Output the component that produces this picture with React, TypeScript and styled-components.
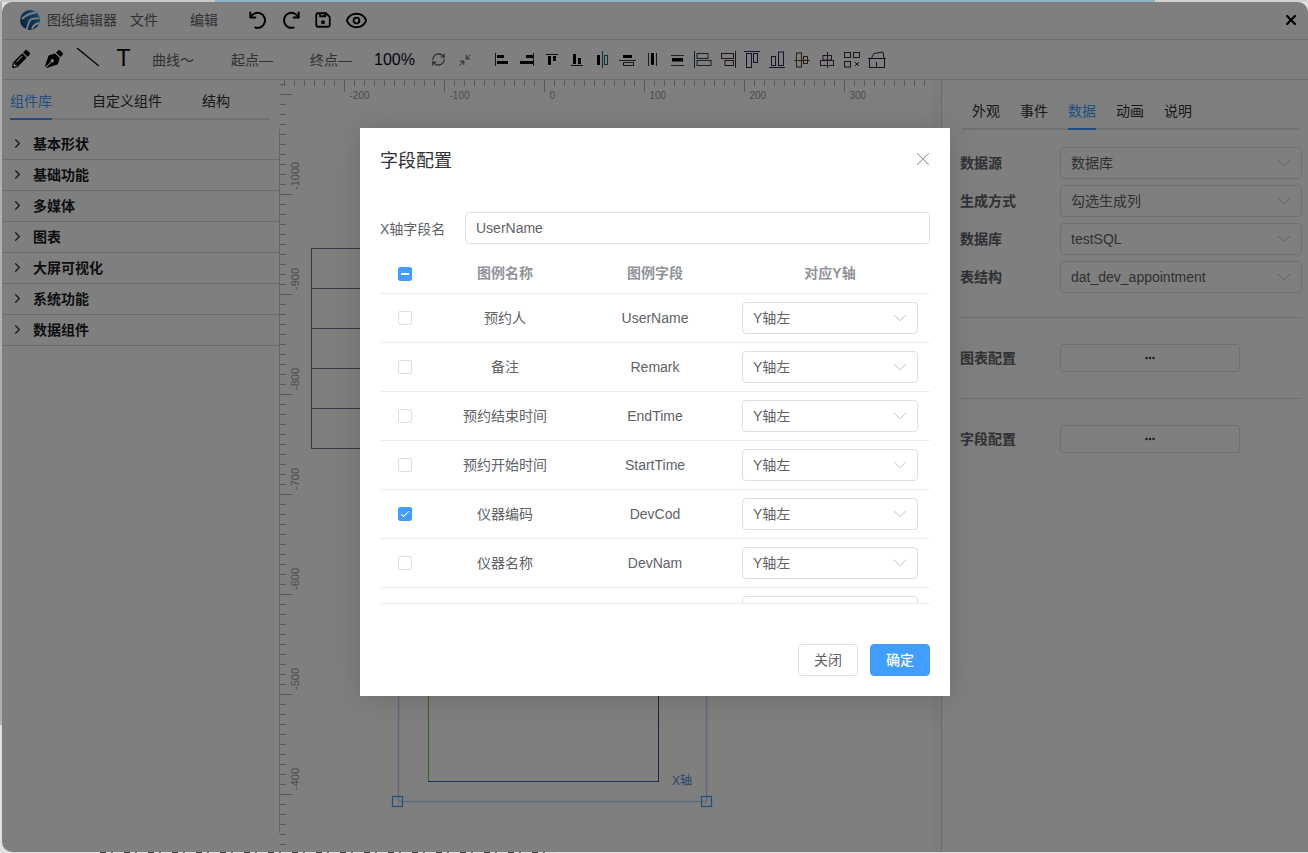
import React from "react";
import styled, { createGlobalStyle } from "styled-components";
import { ChevronDown, ChevronRight, Ellipsis, Eye, Minimize2, RefreshCw, X } from "lucide-react";
import { FaPencilAlt, FaPenNib } from "react-icons/fa";

const Global = createGlobalStyle`
  html, body { height: 100%; margin: 0; }
  body {
    box-sizing: border-box;
    padding: 2px 0 0 2px;
    overflow: hidden;
    font-family: "Liberation Sans", "Noto Sans CJK SC", sans-serif;
    background:
      repeating-linear-gradient(90deg, #444 0 6px, #e6e6e6 6px 11px, #7a6a80 11px 13px, #ddd 13px 24px) 100px 100% / 455px 1px no-repeat,
      linear-gradient(90deg, #c9c9c9 0 215px, #8fb4ca 215px 1155px, #d4d4d4 1155px 1308px) 0 0 / 100% 2px no-repeat,
      linear-gradient(#b0b0b0, #b0b0b0) 0 0 / 2px 725px no-repeat,
      #e2e2e2;
  }
  * { box-sizing: border-box; }
`;

const Window = styled.div`
  position: relative;
  width: 1306px;
  height: 850px;
  background: #fff;
  border-radius: 10px 10px 0 10px;
  overflow: hidden;
  display: flex;
  flex-direction: column;
`;
const Header = styled.header`
  height: 38px;
  flex: none;
  display: flex;
  align-items: center;
  padding: 0 9px 1px 18px;
  border-bottom: 1px solid #dcdcdc;
  font-size: 14px;
  color: #606266;
`;
const AppTitle = styled.span`
  margin-left: 7px;
  padding-bottom: 2px;
  color: #606266;
`;
const Menu = styled.span<{ $ml: number }>`
  margin-left: ${(p) => p.$ml}px;
  padding-bottom: 2px;
  color: #606266;
`;
const HeadIcon = styled.svg<{ $ml: number; $flip?: boolean }>`
  margin-left: ${(p) => p.$ml}px;
  fill: none;
  stroke: #000;
  stroke-width: 2.4;
  stroke-linecap: round;
  stroke-linejoin: round;
  transform: ${(p) => (p.$flip ? "scaleX(-1)" : "none")};
`;
const EyeHolder = styled.span`
  margin-left: 13px;
  display: flex;
  color: #000;
`;
const CloseApp = styled.span`
  margin-left: auto;
  display: flex;
  color: #000;
`;
const Toolbar = styled.div`
  height: 40px;
  flex: none;
  display: flex;
  align-items: center;
  padding-left: 2px;
  border-bottom: 1px solid #dcdcdc;
  color: #000;
`;
const ToolCell = styled.span`
  width: 33px;
  display: flex;
  justify-content: center;
  align-items: center;
  padding-bottom: 2px;
  color: #000;
`;
const TLetter = styled.span`
  margin-left: 8px;
  font-size: 23px;
  line-height: 1;
  color: #000;
`;
const ToolText = styled.span<{ $ml: number }>`
  margin-left: ${(p) => p.$ml}px;
  padding-bottom: 2px;
  font-size: 14px;
  color: #606266;
  white-space: nowrap;
`;
const Zoom = styled.span`
  margin-left: 22px;
  font-size: 16px;
  color: #0a0a2a;
`;
const SmallIcon = styled.span<{ $ml: number }>`
  margin-left: ${(p) => p.$ml}px;
  display: flex;
  color: #444;
`;
const AlignGroup = styled.div`
  margin-left: 18.1px;
  display: flex;
`;
const AlignSvg = styled.svg`
  display: block;
  width: 25px;
  height: 24px;
  fill: none;
  stroke-width: 1;
`;
const Body = styled.div`
  flex: 1;
  min-height: 0;
  display: flex;
`;
const Sidebar = styled.aside`
  width: 278px;
  flex: none;
  padding-top: 2px;
  display: flex;
  flex-direction: column;
`;
const TabBar = styled.div<{ $gap: number; $pad: number; $ml: number; $w: number }>`
  display: flex;
  gap: ${(p) => p.$gap}px;
  padding-left: ${(p) => p.$pad}px;
  margin-left: ${(p) => p.$ml}px;
  width: ${(p) => p.$w}px;
  height: 38px;
  flex: none;
  border-bottom: 2px solid #e4e7ed;
`;
const Tab = styled.div<{ $active?: boolean }>`
  height: 38px;
  line-height: 38px;
  font-size: 14px;
  white-space: nowrap;
  color: ${(p) => (p.$active ? "#409eff" : "#303133")};
  border-bottom: 2px solid ${(p) => (p.$active ? "#409eff" : "transparent")};
`;
const Accordion = styled.div`
  margin: 9px 0 19px;
  flex: 1;
  border-right: 1px solid #c8c8c8;
`;
const AccRow = styled.div`
  height: 31px;
  display: flex;
  align-items: center;
  padding: 0 0 2px 8px;
  gap: 8px;
  border-bottom: 1px solid #d6d6d6;
  font-size: 14px;
  font-weight: 700;
  color: #1a1a1a;
`;
const CanvasArea = styled.main`
  width: 661px;
  flex: none;
  background: #fff;
`;
const CanvasSvg = styled.svg`
  display: block;
  width: 661px;
  height: 772px;
`;
const RightPanel = styled.aside`
  flex: 1;
  padding-top: 12px;
  border-left: 1px solid #d6d6d6;
`;
const Form = styled.div`
  margin: 17px 0 0 18px;
  display: flex;
  flex-direction: column;
  gap: 6px;
  width: 342px;
`;
const FormRow = styled.div`
  display: flex;
  align-items: center;
`;
const Label = styled.span`
  width: 100px;
  padding-bottom: 2px;
  font-size: 14px;
  font-weight: 700;
  color: #606266;
`;
const Select = styled.div<{ $w: number }>`
  width: ${(p) => p.$w}px;
  height: 32px;
  display: flex;
  align-items: center;
  justify-content: space-between;
  padding: 0 6px 0 10px;
  border: 1px solid #dcdfe6;
  border-radius: 4px;
  background: #fff;
  font-size: 14px;
  color: #606266;
  flex: none;
`;
const SelectText = styled.span<{ $cjk?: boolean }>`
  padding-bottom: ${(p) => (p.$cjk ? 2 : 0)}px;
`;
const Divider = styled.div`
  height: 1px;
  background: #dcdfe6;
  width: 342px;
`;
const ConfigRow = styled(FormRow)`
  margin: 26px 0;
`;
const DotsButton = styled.div`
  width: 180px;
  height: 28px;
  display: flex;
  align-items: center;
  justify-content: center;
  border: 1px solid #dcdfe6;
  border-radius: 3px;
  color: #303133;
`;
const ConfigBlock = styled.div`
  margin: 24px 0 0 18px;
`;
const Mask = styled.div`
  position: absolute;
  inset: 0;
  background: rgba(0, 0, 0, 0.5);
`;
const Dialog = styled.section`
  position: relative;
  margin: 126px 0 0 358px;
  width: 590px;
  height: 568px;
  display: flex;
  flex-direction: column;
  padding: 20px;
  background: #fff;
  box-shadow: 0 2px 30px rgba(0, 0, 0, 0.15);
`;
const DialogTitle = styled.h2`
  margin: 0 0 38px;
  font-size: 18px;
  line-height: 26px;
  font-weight: 400;
  color: #303133;
`;
const DialogClose = styled.span`
  position: absolute;
  top: 20px;
  right: 16px;
  display: flex;
  color: #909399;
`;
const FieldRow = styled.div`
  display: flex;
  align-items: center;
  margin-bottom: 10px;
`;
const FieldLabel = styled.label`
  width: 85px;
  font-size: 14px;
  color: #606266;
`;
const TextInput = styled.div`
  flex: 1;
  height: 32px;
  line-height: 30px;
  padding: 0 10px;
  border: 1px solid #dcdfe6;
  border-radius: 4px;
  font-size: 14px;
  color: #606266;
`;
const TableScroll = styled.div`
  height: 350px;
  overflow: hidden;
  border-bottom: 1px solid #ebeef5;
`;
const Row = styled.div<{ $head?: boolean }>`
  display: grid;
  grid-template-columns: 50px 150px 150px 200px;
  align-items: center;
  height: ${(p) => (p.$head ? 40 : 49)}px;
  border-bottom: 1px solid #ebeef5;
  font-size: 14px;
  color: ${(p) => (p.$head ? "#909399" : "#606266")};
  font-weight: ${(p) => (p.$head ? 700 : 400)};
  text-align: center;
`;
const HeadCell = styled.span`
  padding-bottom: 4px;
`;
const NameCell = styled.span`
  padding-bottom: 2px;
`;
const CheckCell = styled.span`
  display: flex;
  justify-content: center;
`;
const Check = styled.span<{ $state?: "on" | "some" }>`
  position: relative;
  width: 14px;
  height: 14px;
  border-radius: 2px;
  border: 1px solid ${(p) => (p.$state ? "#409eff" : "#dcdfe6")};
  background: ${(p) => (p.$state ? "#409eff" : "#fff")};
  &::after {
    content: "";
    position: absolute;
    display: ${(p) => (p.$state ? "block" : "none")};
    ${(p) =>
      p.$state === "on"
        ? `left: 4px; top: 1px; width: 3px; height: 7px; border: 1px solid #fff; border-width: 0 1px 1px 0; transform: rotate(45deg);`
        : `left: 2px; top: 5px; width: 8px; height: 2px; background: #fff;`}
  }
`;
const SelectCell = styled.span`
  display: flex;
  justify-content: center;
`;
const Footer = styled.div`
  margin-top: auto;
  display: flex;
  justify-content: flex-end;
  gap: 12px;
`;
const Button = styled.button<{ $primary?: boolean }>`
  width: 60px;
  height: 32px;
  padding: 0 0 2px;
  border-radius: 4px;
  border: 1px solid ${(p) => (p.$primary ? "#409eff" : "#dcdfe6")};
  background: ${(p) => (p.$primary ? "#409eff" : "#fff")};
  color: ${(p) => (p.$primary ? "#fff" : "#606266")};
  font: ${(p) => (p.$primary ? 500 : 400)} 14px "Liberation Sans", "Noto Sans CJK SC", sans-serif;
`;

const Logo = () => (
  <svg width="20" height="20" viewBox="0 0 20 20">
    <defs>
      <linearGradient id="lg" x1="0" y1="1" x2="1" y2="0">
        <stop offset="0" stopColor="#0f3766" />
        <stop offset="1" stopColor="#2f9be6" />
      </linearGradient>
    </defs>
    <circle cx="10" cy="10" r="10" fill="url(#lg)" />
    <path d="M2 9 C6 5 11 3 16 2.5 M6.5 19.5 L9 12 C10 9 14 8 19 8.5 M12 19 C13 15.5 16 13.5 19.5 13" fill="none" stroke="#fff" strokeWidth="1.8" />
  </svg>
);

const Undo = ({ ml, flip }: { ml: number; flip?: boolean }) => (
  <HeadIcon $ml={ml} $flip={flip} width="20" height="20" viewBox="0 0 24 24">
    <path d="M4.5 8.5A9 9 0 1 1 10 21" />
    <path d="M4 3v6h6" />
  </HeadIcon>
);

type Shape = [number, number, number, number, string?];
type AlignDef = { x0: number; c: string; lines?: number[][]; rects: Shape[] };
const K = "#000";
const alignIcons: AlignDef[] = [
  { x0: 490, c: "#1c2b3a", lines: [[495.5, 53, 495.5, 66]], rects: [[497, 55, 7, 3, K], [497, 61, 11, 3, K]] },
  { x0: 515, c: "#2a2218", lines: [[533.5, 53, 533.5, 66]], rects: [[526, 55, 7, 3, K], [520, 61, 13, 3, K]] },
  { x0: 540, c: "#222", lines: [[546, 54.5, 558, 54.5]], rects: [[548, 56, 3, 9, K], [553, 56, 3, 5, K]] },
  { x0: 565, c: "#222", lines: [[571, 65.5, 583, 65.5]], rects: [[573, 54, 3, 10, K], [578, 58, 3, 6, K]] },
  { x0: 590, c: "#1d5a80", lines: [[602.5, 51, 602.5, 68]], rects: [[597, 55, 3, 10, K], [604.5, 55.5, 3, 9]] },
  { x0: 615, c: "#333", lines: [[619, 60.5, 636, 60.5]], rects: [[623, 55, 9, 3, K], [623.5, 62.5, 10, 3]] },
  { x0: 640, c: "#335", lines: [[648.5, 53, 648.5, 66], [656.5, 53, 656.5, 66]], rects: [[651, 53, 3, 12, K]] },
  { x0: 665, c: "#444", lines: [[671, 55.5, 684, 55.5], [671, 65.5, 684, 65.5]], rects: [[672, 58, 11, 3.5, K]] },
  { x0: 690, c: "#2a3f55", lines: [[694.5, 51, 694.5, 68]], rects: [[697, 53.5, 11, 5], [697, 60.5, 14, 5]] },
  { x0: 715, c: "#3a2a30", lines: [[735.5, 51, 735.5, 68]], rects: [[721.5, 53.5, 12, 5], [725, 60.5, 8.5, 5]] },
  { x0: 740, c: "#3a1d4d", lines: [[744, 51.5, 760, 51.5]], rects: [[746.5, 53.5, 5, 14], [753.5, 53.5, 4, 9]] },
  { x0: 765, c: "#2b2350", lines: [[769, 67.5, 785, 67.5]], rects: [[771.5, 56.5, 4, 9], [778.5, 52, 5, 13.5]] },
  { x0: 790, c: "#4d3a1d", lines: [[794, 60.5, 810, 60.5]], rects: [[796.5, 53, 5, 14], [803.5, 56.5, 4, 7]] },
  { x0: 815, c: "#4a2a4a", lines: [[827.5, 52, 827.5, 68]], rects: [[823, 55.5, 8.5, 4.5], [820.5, 60.5, 13, 5]] },
  { x0: 840, c: "#3a3020", rects: [[844.5, 52.5, 6, 5], [853.5, 52.5, 6, 5], [844.5, 61.5, 6, 5.5]], lines: [[855, 62, 859, 66], [859, 62, 855, 66]] },
  { x0: 865, c: "#2f2040", rects: [[869.5, 58.5, 15, 9]], lines: [[868, 58.5, 886, 58.5], [871.5, 58, 874, 53.5], [874, 53.5, 883, 52], [883, 52, 884, 58], [876.5, 62, 876.5, 67]] },
];

const AlignIcon = ({ def }: { def: AlignDef }) => (
  <AlignSvg viewBox={`${def.x0} 48 25 24`}>
    {def.lines?.map((l, i) => (
      <line key={i} x1={l[0]} y1={l[1]} x2={l[2]} y2={l[3]} stroke={def.c} />
    ))}
    {def.rects.map((r, i) => (
      <rect key={i} x={r[0]} y={r[1]} width={r[2]} height={r[3]} fill={r[4] ?? "none"} stroke={r[4] ? "none" : def.c} />
    ))}
  </AlignSvg>
);

const range = (from: number, to: number, step: number) => {
  const out: number[] = [];
  for (let v = from; v <= to; v += step) out.push(v);
  return out;
};

const CanvasDrawing = () => (
  <CanvasSvg viewBox="280 80 661 772">
    <rect x="931" y="80" width="10" height="772" fill="#f8f8f8" />
    {range(284.5, 925, 10).map((x) => {
      const long = Math.round(x - 544.5) % 100 === 0;
      return <line key={x} x1={x} y1={80} x2={x} y2={long ? 92 : 86} stroke="#b0b0b0" />;
    })}
    {range(-200, 300, 100).map((n) => (
      <text key={n} x={544.5 + n + 5} y={99} fontSize="10" fill="#999" fontFamily="Liberation Sans">
        {n}
      </text>
    ))}
    {range(84.5, 845, 10).map((y) => {
      const long = Math.round(y - 194.5) % 100 === 0;
      return <line key={y} x1={280} y1={y} x2={long ? 292 : 286} y2={y} stroke="#b0b0b0" />;
    })}
    {range(-1000, -400, 100).map((n, i) => {
      const y = 190 + i * 100;
      return (
        <text key={n} x={299} y={y} transform={`rotate(-90 299 ${y})`} fontSize="11" fill="#999" fontFamily="Liberation Sans">
          {n}
        </text>
      );
    })}
    {[248.5, 288.5, 328.5, 368.5, 408.5, 448.5].map((y) => (
      <line key={y} x1={311} y1={y} x2={420} y2={y} stroke="#70708c" />
    ))}
    <line x1="311.5" y1="248" x2="311.5" y2="449" stroke="#70708c" />
    <line x1="398.5" y1="600" x2="398.5" y2="801" stroke="#b6d4f5" strokeWidth="1.5" />
    <line x1="706.5" y1="600" x2="706.5" y2="801" stroke="#b6d4f5" strokeWidth="1.5" />
    <line x1="398" y1="801.5" x2="707" y2="801.5" stroke="#b6d4f5" strokeWidth="1.5" />
    <line x1="428.5" y1="600" x2="428.5" y2="782" stroke="#6fbf3a" />
    <line x1="428" y1="781.5" x2="658" y2="781.5" stroke="#3a6a9c" />
    <line x1="658.5" y1="600" x2="658.5" y2="782" stroke="#3a4a80" />
    <text x="672" y="785" fontSize="12" fill="#4a8ed6" fontFamily="Liberation Sans, Noto Sans CJK SC">
      X轴
    </text>
    <rect x="392.5" y="796.5" width="10" height="10" fill="none" stroke="#409eff" strokeWidth="1.2" />
    <rect x="701.5" y="796.5" width="10" height="10" fill="none" stroke="#409eff" strokeWidth="1.2" />
  </CanvasSvg>
);

const SideItems = ["基本形状", "基础功能", "多媒体", "图表", "大屏可视化", "系统功能", "数据组件"];
const RightTabs = ["外观", "事件", "数据", "动画", "说明"];
const FormItems: [string, string, boolean][] = [
  ["数据源", "数据库", true],
  ["生成方式", "勾选生成列", true],
  ["数据库", "testSQL", false],
  ["表结构", "dat_dev_appointment", false],
];
const Fields: { name: string; field: string; state?: "on" }[] = [
  { name: "预约人", field: "UserName" },
  { name: "备注", field: "Remark" },
  { name: "预约结束时间", field: "EndTime" },
  { name: "预约开始时间", field: "StartTime" },
  { name: "仪器编码", field: "DevCod", state: "on" },
  { name: "仪器名称", field: "DevNam" },
  { name: "", field: "" },
];

const Chevron = () => <ChevronDown size={22} strokeWidth={0.9} color="#aeb2ba" />;

export default function App() {
  return (
    <>
      <Global />
      <Window>
        <Header>
          <Logo />
          <AppTitle>图纸编辑器</AppTitle>
          <Menu $ml={13}>文件</Menu>
          <Menu $ml={32}>编辑</Menu>
          <Undo ml={29} />
          <Undo ml={15} flip />
          <HeadIcon $ml={12} width="18" height="18" viewBox="0 0 24 24">
            <path d="M5 3h11l5 5v11a2 2 0 0 1-2 2H5a2 2 0 0 1-2-2V5a2 2 0 0 1 2-2z" />
            <path d="M8 3v4h7V3" />
            <circle cx="12" cy="15" r="1.5" fill="#000" />
          </HeadIcon>
          <EyeHolder>
            <Eye size={23} strokeWidth={2} />
          </EyeHolder>
          <CloseApp>
            <X size={16} strokeWidth={3.2} />
          </CloseApp>
        </Header>
        <Toolbar>
          <ToolCell>
            <FaPencilAlt size={18} />
          </ToolCell>
          <ToolCell>
            <FaPenNib size={18} />
          </ToolCell>
          <ToolCell>
            <svg width="24" height="24" viewBox="0 0 24 24">
              <line x1="2" y1="1" x2="24" y2="19" stroke="#000" strokeWidth="1.3" />
            </svg>
          </ToolCell>
          <ToolCell>
            <TLetter>T</TLetter>
          </ToolCell>
          <ToolText $ml={16}>曲线～</ToolText>
          <ToolText $ml={37}>起点—</ToolText>
          <ToolText $ml={37}>终点—</ToolText>
          <Zoom>100%</Zoom>
          <SmallIcon $ml={16}>
            <RefreshCw size={15} strokeWidth={1.7} />
          </SmallIcon>
          <SmallIcon $ml={12}>
            <Minimize2 size={14} strokeWidth={1.6} />
          </SmallIcon>
          <AlignGroup>
            {alignIcons.map((def) => (
              <AlignIcon key={def.x0} def={def} />
            ))}
          </AlignGroup>
        </Toolbar>
        <Body>
          <Sidebar>
            <TabBar $gap={40} $pad={0} $ml={8} $w={260}>
              <Tab $active>组件库</Tab>
              <Tab>自定义组件</Tab>
              <Tab>结构</Tab>
            </TabBar>
            <Accordion>
              {SideItems.map((s) => (
                <AccRow key={s}>
                  <ChevronRight size={15} strokeWidth={2} color="#303133" />
                  {s}
                </AccRow>
              ))}
            </Accordion>
          </Sidebar>
          <CanvasArea>
            <CanvasDrawing />
          </CanvasArea>
          <RightPanel>
            <TabBar $gap={20} $pad={10} $ml={20} $w={338}>
              {RightTabs.map((t) => (
                <Tab key={t} $active={t === "数据"}>
                  {t}
                </Tab>
              ))}
            </TabBar>
            <Form>
              {FormItems.map(([label, value, cjk]) => (
                <FormRow key={label}>
                  <Label>{label}</Label>
                  <Select $w={242}>
                    <SelectText $cjk={cjk}>{value}</SelectText>
                    <Chevron />
                  </Select>
                </FormRow>
              ))}
            </Form>
            {["图表配置", "字段配置"].map((label) => (
              <ConfigBlock key={label}>
                <Divider />
                <ConfigRow>
                  <Label>{label}</Label>
                  <DotsButton>
                    <Ellipsis size={12} strokeWidth={3} />
                  </DotsButton>
                </ConfigRow>
              </ConfigBlock>
            ))}
          </RightPanel>
        </Body>
        <Mask>
          <Dialog>
            <DialogTitle>字段配置</DialogTitle>
            <DialogClose>
              <X size={22} strokeWidth={1.1} />
            </DialogClose>
            <FieldRow>
              <FieldLabel>X轴字段名</FieldLabel>
              <TextInput>UserName</TextInput>
            </FieldRow>
            <TableScroll>
              <Row $head>
                <CheckCell>
                  <Check $state="some" />
                </CheckCell>
                <HeadCell>图例名称</HeadCell>
                <HeadCell>图例字段</HeadCell>
                <HeadCell>对应Y轴</HeadCell>
              </Row>
              {Fields.map((f, i) => (
                <Row key={i}>
                  <CheckCell>
                    <Check $state={f.state} />
                  </CheckCell>
                  <NameCell>{f.name}</NameCell>
                  <span>{f.field}</span>
                  <SelectCell>
                    <Select $w={176}>
                      <SelectText $cjk>{f.field ? "Y轴左" : ""}</SelectText>
                      <Chevron />
                    </Select>
                  </SelectCell>
                </Row>
              ))}
            </TableScroll>
            <Footer>
              <Button>关闭</Button>
              <Button $primary>确定</Button>
            </Footer>
          </Dialog>
        </Mask>
      </Window>
    </>
  );
}
